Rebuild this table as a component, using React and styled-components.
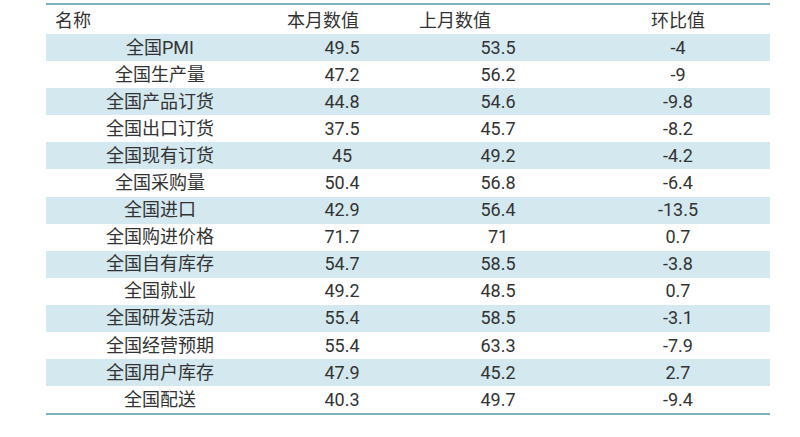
import React from 'react';
import styled, { createGlobalStyle } from 'styled-components';

const GlobalStyle = createGlobalStyle`
  body {
    margin: 0;
    background: #fff;
    font-family: Roboto, "Noto Sans CJK SC", sans-serif;
  }
`;

const Page = styled.div`
  padding: 3px 30px 0 46px;
`;

const Table = styled.div`
  width: 724px;
  border-top: 2px solid #7fb0be;
  border-bottom: 2px solid #7fb0be;
  color: #333;
  font-size: 18px;
`;

const columns = '228px 136px 176px 184px';

const HeaderRow = styled.div`
  display: grid;
  grid-template-columns: ${columns};
  height: 27px;
  align-items: center;
  padding-top: 2px;
`;

const HeaderCell = styled.div`
  text-align: ${props => (props.left ? 'left' : 'center')};
  padding-left: ${props => props.padLeft || 0}px;
  padding-right: ${props => props.padRight || 0}px;
  line-height: 1;
`;

const Row = styled.div`
  display: grid;
  grid-template-columns: ${columns};
  height: 27.1px;
  align-items: center;
  background: ${props => (props.shaded ? '#d4e8ef' : '#fff')};
`;

const Cell = styled.div`
  text-align: center;
  line-height: 1;
`;

const rows = [
  ['全国PMI', '49.5', '53.5', '-4'],
  ['全国生产量', '47.2', '56.2', '-9'],
  ['全国产品订货', '44.8', '54.6', '-9.8'],
  ['全国出口订货', '37.5', '45.7', '-8.2'],
  ['全国现有订货', '45', '49.2', '-4.2'],
  ['全国采购量', '50.4', '56.8', '-6.4'],
  ['全国进口', '42.9', '56.4', '-13.5'],
  ['全国购进价格', '71.7', '71', '0.7'],
  ['全国自有库存', '54.7', '58.5', '-3.8'],
  ['全国就业', '49.2', '48.5', '0.7'],
  ['全国研发活动', '55.4', '58.5', '-3.1'],
  ['全国经营预期', '55.4', '63.3', '-7.9'],
  ['全国用户库存', '47.9', '45.2', '2.7'],
  ['全国配送', '40.3', '49.7', '-9.4'],
];

export default function App() {
  return (
    <>
      <GlobalStyle />
      <Page>
        <Table>
          <HeaderRow>
            <HeaderCell left padLeft={9}>名称</HeaderCell>
            <HeaderCell padRight={38}>本月数值</HeaderCell>
            <HeaderCell padRight={86}>上月数值</HeaderCell>
            <HeaderCell>环比值</HeaderCell>
          </HeaderRow>
          {rows.map((r, i) => (
            <Row key={r[0]} shaded={i % 2 === 0}>
              {r.map((v, j) => (
                <Cell key={j}>{v}</Cell>
              ))}
            </Row>
          ))}
        </Table>
      </Page>
    </>
  );
}
